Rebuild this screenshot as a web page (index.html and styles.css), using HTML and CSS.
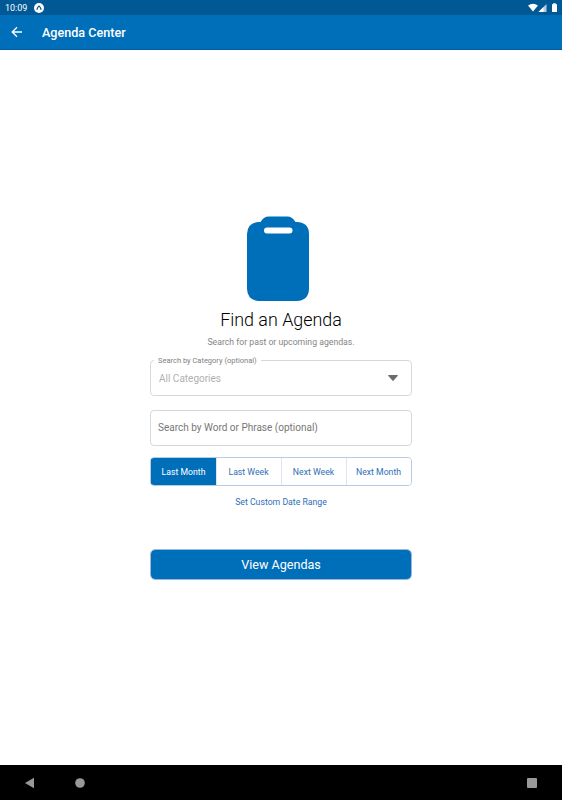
FILE: index.html
```html
<!DOCTYPE html>
<html lang="en">

<head>
    <meta charset="UTF-8">
    <meta name="viewport" content="width=device-width, initial-scale=1.0">
    <title>Agenda Center</title>
    <link rel="stylesheet" href="styles.css">
</head>

<body>
    <div class="status-bar">
        <span class="clock">10:09</span>
        <svg class="app-badge" width="10" height="10" viewBox="0 0 10 10">
            <circle cx="5" cy="5" r="5" fill="#fff" />
            <path d="M2.8 6.8 Q4.2 3.2 5 3.2 Q5.8 3.2 7.2 6.8" fill="none" stroke="#00558f" stroke-width="1.2" />
        </svg>
        <svg class="status-icons" width="30" height="10" viewBox="0 0 30 10">
            <path d="M0 2.6 Q5 -1.2 10 2.6 L5 8.6 Z" fill="#fff" />
            <path d="M10.5 9 L18.5 1 V9 Z" fill="#b5cde0" />
            <path d="M10.5 9 L15.5 4 V9 Z" fill="#fff" />
            <path d="M24 1.2 H25.2 V0.3 H27.8 V1.2 H29 V9 H24 Z" fill="#fff" />
        </svg>
    </div>

    <header>
        <button class="back" aria-label="Back">
            <svg width="12" height="12" viewBox="0 0 12 12">
                <path d="M11 6 H1.5 M6 1.2 L1.2 6 L6 10.8" fill="none" stroke="#fff" stroke-width="1.3" />
            </svg>
        </button>
        <h1>Agenda Center</h1>
    </header>

    <main>
        <svg class="clipboard" width="62" height="85" viewBox="0 0 62 85">
            <path d="M12 6 H13.5 C15.5 2.5 18 0.5 22 0.5 H40 C44 0.5 46.5 2.5 48.5 6 H50 Q62 6.5 62 18 V73 Q61.5 84.5 50 85 H12 Q0.5 84.5 0 73 V18 Q0.5 6.5 12 6 Z" fill="#006fba" />
            <rect x="17" y="11.5" width="28.5" height="6" rx="3" fill="#fff" />
        </svg>
        <h2>Find an Agenda</h2>
        <p class="hint">Search for past or upcoming agendas.</p>

        <form>
            <fieldset class="category">
                <legend>Search by Category (optional)</legend>
                <span>All Categories</span>
                <svg width="10" height="6" viewBox="0 0 10 6">
                    <path d="M0.7 0 H9.3 Q10.3 0.2 9.6 1.1 L5.6 5.6 Q5 6.2 4.4 5.6 L0.4 1.1 Q-0.3 0.2 0.7 0 Z" fill="#6b6b6b" />
                </svg>
            </fieldset>

            <input class="phrase" type="text" placeholder="Search by Word or Phrase (optional)">

            <div class="ranges">
                <button type="button" class="active">Last Month</button>
                <button type="button">Last Week</button>
                <button type="button">Next Week</button>
                <button type="button">Next Month</button>
            </div>

            <a class="custom-range" href="#">Set Custom Date Range</a>
            <button type="button" class="submit">View Agendas</button>
        </form>
    </main>

    <nav class="system-nav">
        <svg width="10" height="12" viewBox="0 0 10 12">
            <path d="M0 6 L9 0.8 V11.2 Z" fill="#999" />
        </svg>
        <svg class="home" width="10" height="10" viewBox="0 0 10 10">
            <circle cx="5" cy="5" r="4.8" fill="#999" />
        </svg>
        <svg class="recents" width="10" height="10" viewBox="0 0 10 10">
            <rect width="10" height="10" rx="1" fill="#999" />
        </svg>
    </nav>
</body>

</html>
```

FILE: styles.css
```css
* {
    box-sizing: border-box;
}

body {
    font-family: Roboto, sans-serif;
    margin: 0;
    height: 800px;
    display: flex;
    flex-direction: column;
    background-color: white;
    overflow: hidden;
}

button,
input {
    font-family: inherit;
}

.status-bar {
    height: 15px;
    padding: 0 4px 0 5px;
    display: flex;
    align-items: center;
    background-color: #005895;
    color: white;
}

.clock {
    font-size: 9px;
    line-height: 15px;
    padding-top: 1px;
}

.app-badge {
    margin-left: 7px;
}

.status-icons {
    margin-left: auto;
}

header {
    height: 35px;
    padding: 0 10.5px;
    display: flex;
    align-items: center;
    background-color: #006fba;
    border-bottom: 1px solid #0059a5;
    color: white;
}

.back {
    display: flex;
    padding: 0;
    border: none;
    background: none;
}

h1 {
    margin: 2px 0 0 19.5px;
    font-size: 12.6px;
    font-weight: 500;
    line-height: 16px;
}

main {
    flex: 1;
    padding-top: 166px;
    display: flex;
    flex-direction: column;
    align-items: center;
}

.clipboard {
    margin-right: 6px;
}

h2 {
    margin: 8px 0 0;
    font-size: 17.9px;
    font-weight: 300;
    line-height: 22px;
    color: black;
}

.hint {
    margin: 5px 0 0;
    font-size: 8.7px;
    line-height: 12px;
    color: #858585;
}

form {
    width: 262px;
    margin-top: 7px;
    display: flex;
    flex-direction: column;
}

.category {
    height: 41px;
    margin: 0;
    padding: 7px 13px 0 8px;
    display: flex;
    align-items: flex-start;
    justify-content: space-between;
    border: 1px solid #d8d8d8;
    border-radius: 4px;
    font-size: 10px;
    line-height: 12px;
    color: #b0b0b0;
}

.category svg {
    margin-top: 2px;
}

.category legend {
    margin-left: -5px;
    padding: 0 4px;
    font-size: 7.5px;
    line-height: 11px;
    color: #808080;
}

.phrase {
    height: 36px;
    margin-top: 14px;
    padding: 0 7px 1px;
    border: 1px solid #d8d8d8;
    border-radius: 4px;
    font-size: 10px;
}

.phrase::placeholder {
    color: #777;
}

.ranges {
    height: 29px;
    margin-top: 11px;
    display: flex;
    border: 1px solid #b9cbe2;
    border-radius: 4px;
    overflow: hidden;
}

.ranges button {
    flex: 1;
    padding: 0 1px 0 0;
    border: none;
    border-left: 1px solid #dce6f3;
    background-color: white;
    font-size: 8.7px;
    color: #2e6fb8;
}

.ranges .active {
    border-left-color: #006fba;
    background-color: #006fba;
    color: white;
}

.custom-range {
    align-self: center;
    margin-top: 10px;
    font-size: 8.7px;
    line-height: 12px;
    color: #2e6fb8;
    text-decoration: none;
}

.submit {
    height: 31px;
    margin-top: 41px;
    border: 1px solid #9ab9de;
    border-radius: 5px;
    background-color: #006fba;
    background-clip: padding-box;
    font-size: 12.6px;
    color: white;
}

.system-nav {
    height: 35px;
    padding: 0 25px;
    display: flex;
    align-items: center;
    background-color: black;
}

.home {
    margin-left: 40px;
}

.recents {
    margin-left: auto;
}
```
